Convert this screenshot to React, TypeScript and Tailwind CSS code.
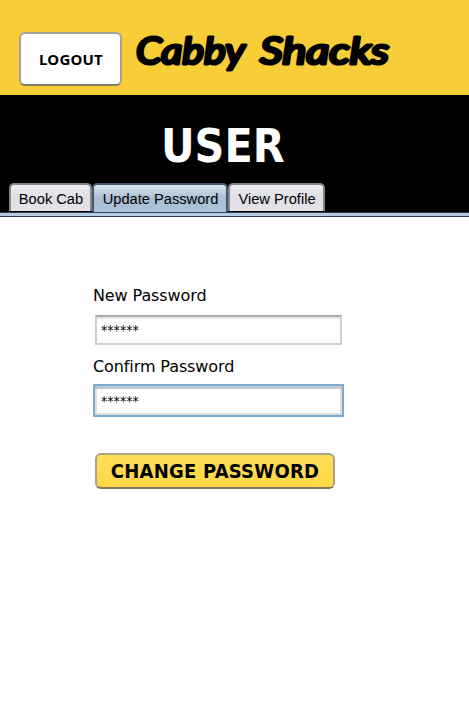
const tabs = [
  { label: "Book Cab", box: "w-[83px]", active: false },
  { label: "Update Password", box: "w-[136px]", active: true },
  { label: "View Profile", box: "w-[97px]", active: false },
];

function Tab({ label, box, active }: { label: string; box: string; active: boolean }) {
  const tone = active
    ? "border-[#44556b] bg-linear-to-b from-[#dce5ee] via-[#a8bed2] to-[#adc3d8] h-[29px] pb-[2px]"
    : "border-[#85858b] bg-linear-to-b from-[#ececf0] via-[#dedfe5] to-[#e4e4e9] h-[28px]";
  return (
    <button
      className={`${box} ${tone} rounded-t-[5px] border-2 border-b-0 pt-[2px] pl-[1px] text-center text-[14.67px] leading-[24px] whitespace-nowrap text-black`}
    >
      {label}
    </button>
  );
}

export default function App() {
  return (
    <div className="h-[714px] w-[469px] overflow-hidden bg-white font-['DejaVu_Sans_Condensed','DejaVu_Sans',sans-serif] text-black">
      <header className="flex h-[95px] items-start bg-[#f7ce38]">
        <button className="mt-[32px] ml-[19px] h-[54px] w-[103px] shrink-0 rounded-[6px] border-2 border-[#a7a294] border-b-[#807b6d] bg-white pl-[1px] font-['Noto_Sans',sans-serif] text-[15px] font-bold tracking-[0.2px]">
          LOGOUT
        </button>
        <svg className="mt-[25px] ml-[8px] h-[65px] w-[270px]" viewBox="130 25 270 65" aria-label="Cabby Shacks">
          <g
            className="font-['Lato',sans-serif] font-normal italic"
            fontSize="37"
            stroke="#000"
            strokeWidth="3.2"
            strokeLinecap="round"
            strokeLinejoin="round"
          >
            <text x="136" y="64" textLength="109" lengthAdjust="spacingAndGlyphs">Cabby</text>
            <text x="260" y="64" textLength="129" lengthAdjust="spacingAndGlyphs">Shacks</text>
          </g>
        </svg>
      </header>
      <section className="flex h-[117px] flex-col justify-between bg-black">
        <h1 className="pt-[22px] pl-[161px] font-['DejaVu_Sans_Condensed','DejaVu_Sans',sans-serif] text-[46px] leading-[58px] font-bold text-white">
          USER
        </h1>
        <nav className="flex h-[29px] items-start pl-[9px] font-['Liberation_Sans',sans-serif]">
          {tabs.map((t) => (
            <Tab key={t.label} {...t} />
          ))}
        </nav>
      </section>
      <div className="h-[5px] border-y border-[#2c3a55] bg-[#b4cbe1]" />
      <main className="pt-[68px] pl-[93px]">
        <label className="block h-[22px] font-['DejaVu_Sans',sans-serif] text-[16px] leading-[22px] tracking-[-0.1px] whitespace-nowrap">New Password</label>
        <div className="mt-[8px] ml-[2px] h-[30px] w-[247px] border-2 border-[#d0d0d0] border-t-[#aaa] bg-white pl-[4px] text-[14px] leading-[26px] shadow-[inset_0_2px_1px_#e5e5e5]">
          ******
        </div>
        <label className="mt-[11px] block h-[22px] font-['DejaVu_Sans',sans-serif] text-[16px] leading-[22px] tracking-[-0.1px] whitespace-nowrap">Confirm Password</label>
        <div className="mt-[6px] h-[33px] w-[251px] border-2 border-[#7caad3] bg-white pl-[6px] text-[14px] leading-[30px] shadow-[inset_0_3px_1px_#c4c8cc,inset_0_0_0_2px_#dedede]">
          ******
        </div>
        <button className="mt-[36px] ml-[2px] block h-[36px] w-[240px] rounded-[6px] border-2 border-[#aaa38c] border-b-[#807858] bg-linear-to-b from-[#ffdf58] to-[#ffd743] font-['DejaVu_Sans_Condensed','DejaVu_Sans',sans-serif] text-[20px] leading-[33px] font-bold tracking-[0.25px] whitespace-nowrap">
          CHANGE PASSWORD
        </button>
      </main>
    </div>
  );
}
